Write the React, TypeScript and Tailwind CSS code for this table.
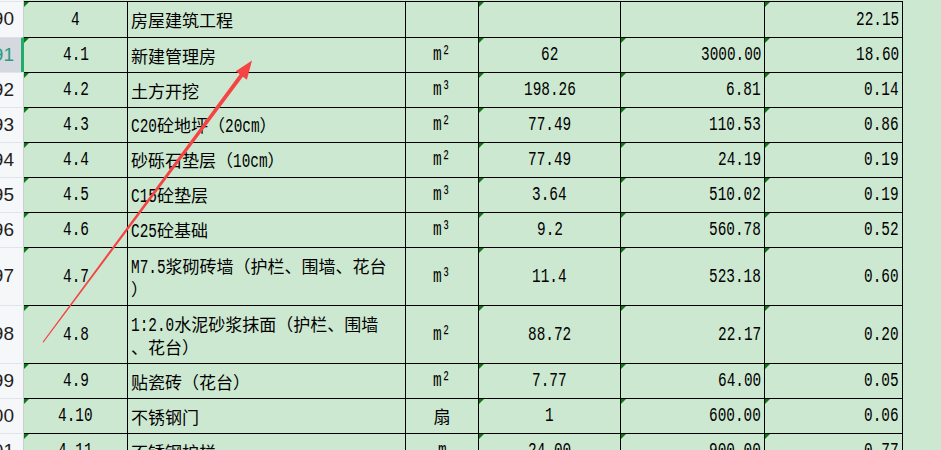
import React from "react";

type Row = {
  h: number;
  hdr: string;
  sel?: boolean;
  no: string;
  desc: string[];
  unit: string;
  qty: string;
  price: string;
  total: string;
  priceTri: boolean;
};

const rows: Row[] = [
  { h: 36, hdr: "90", no: "4", desc: ["房屋建筑工程"], unit: "", qty: "", price: "", total: "22.15", priceTri: false },
  { h: 35, hdr: "91", sel: true, no: "4.1", desc: ["新建管理房"], unit: "m²", qty: "62", price: "3000.00", total: "18.60", priceTri: true },
  { h: 35, hdr: "92", no: "4.2", desc: ["土方开挖"], unit: "m³", qty: "198.26", price: "6.81", total: "0.14", priceTri: true },
  { h: 35, hdr: "93", no: "4.3", desc: ["C20砼地坪（20cm）"], unit: "m²", qty: "77.49", price: "110.53", total: "0.86", priceTri: true },
  { h: 35, hdr: "94", no: "4.4", desc: ["砂砾石垫层（10cm）"], unit: "m²", qty: "77.49", price: "24.19", total: "0.19", priceTri: true },
  { h: 35, hdr: "95", no: "4.5", desc: ["C15砼垫层"], unit: "m³", qty: "3.64", price: "510.02", total: "0.19", priceTri: true },
  { h: 35, hdr: "96", no: "4.6", desc: ["C25砼基础"], unit: "m³", qty: "9.2", price: "560.78", total: "0.52", priceTri: true },
  { h: 58, hdr: "97", no: "4.7", desc: ["M7.5浆砌砖墙（护栏、围墙、花台", "）"], unit: "m³", qty: "11.4", price: "523.18", total: "0.60", priceTri: true },
  { h: 58, hdr: "98", no: "4.8", desc: ["1:2.0水泥砂浆抹面（护栏、围墙", "、花台）"], unit: "m²", qty: "88.72", price: "22.17", total: "0.20", priceTri: true },
  { h: 35, hdr: "99", no: "4.9", desc: ["贴瓷砖（花台）"], unit: "m²", qty: "7.77", price: "64.00", total: "0.05", priceTri: true },
  { h: 35, hdr: "100", no: "4.10", desc: ["不锈钢门"], unit: "扇", qty: "1", price: "600.00", total: "0.06", priceTri: true },
  { h: 35, hdr: "101", no: "4.11", desc: ["不锈钢护栏"], unit: "m", qty: "24.00", price: "900.00", total: "0.77", priceTri: true },
];

function Asc({ t }: { t: string }) {
  return (
    <span
      className="inline-block origin-left scale-x-[0.72] font-['Liberation_Mono',monospace] text-[20px] whitespace-pre"
      style={{ marginRight: -t.length * 3.36 }}
    >
      {t}
    </span>
  );
}

function Mixed({ text }: { text: string }) {
  const parts = text.split(/([\x20-\x7e²³]+)/).filter((p) => p.length > 0);
  return (
    <>
      {parts.map((p, i) =>
        /^[\x20-\x7e²³]+$/.test(p) ? <Asc key={i} t={p} /> : <span key={i}>{p}</span>
      )}
    </>
  );
}

function Tri() {
  return (
    <div className="absolute left-0 top-0 h-0 w-0 border-t-[5px] border-r-[5px] border-t-[#0c7a12] border-r-transparent" />
  );
}

const cell = "relative flex h-full items-center border-t border-r border-black";

export default function App() {
  return (
    <div className="relative h-[450px] w-[941px] overflow-hidden bg-[#cde8d0] font-['Noto_Sans_CJK_SC',sans-serif] text-[17px] text-black">
      <div className="flex h-px">
        <div className="w-[24px] border-r border-[#c9ced6] bg-[#f6f7f9]" />
        <div className="flex-1" />
      </div>
      {rows.map((r) => (
        <div key={r.hdr} className="flex" style={{ height: r.h }}>
          <div
            className={
              r.sel
                ? "flex h-full w-[24px] shrink-0 items-center justify-end overflow-hidden border-t border-r-[3px] border-t-[#dde0e6] border-r-[#1fae6a] bg-[#d5d8de] pr-[7px] font-['Liberation_Sans',sans-serif] text-[19px] whitespace-nowrap text-[#2a9d7c]"
                : "flex h-full w-[24px] shrink-0 items-center justify-end overflow-hidden border-t border-r border-t-[#e1e4e9] border-r-[#c9ced6] bg-[#f6f7f9] pr-[9px] font-['Liberation_Sans',sans-serif] text-[19px] whitespace-nowrap text-[#1f1f1f]"
            }
          >
            {r.hdr}
          </div>
          <div className={`${cell} w-[104px] shrink-0 justify-center`}>
            <Tri />
            <Mixed text={r.no} />
          </div>
          <div className={`${cell} w-[278px] shrink-0 pl-[3px]`}>
            <div className="flex flex-col leading-[21px]">
              {r.desc.map((d, i) => (
                <div key={i} className="whitespace-nowrap">
                  <Mixed text={d} />
                </div>
              ))}
            </div>
          </div>
          <div className={`${cell} w-[73px] shrink-0 justify-center`}>
            <Mixed text={r.unit} />
          </div>
          <div className={`${cell} w-[142px] shrink-0 justify-center`}>
            <Tri />
            <Mixed text={r.qty} />
          </div>
          <div className={`${cell} w-[144px] shrink-0 justify-end pr-[3px]`}>
            {r.priceTri && <Tri />}
            <Mixed text={r.price} />
          </div>
          <div className={`${cell} w-[138px] shrink-0 justify-end pr-[3px]`}>
            <Tri />
            <Mixed text={r.total} />
          </div>
          <div className="flex-1" />
        </div>
      ))}
      <svg
        className="pointer-events-none absolute left-0 top-0"
        width={941}
        height={450}
        viewBox="0 0 941 450"
      >
        <polygon
          points="42.5,342 239.7,74.3 235.7,71.3 252,60.5 246.9,79.7 242.9,76.7 43.5,342.5"
          fill="#f54444"
        />
      </svg>
    </div>
  );
}
